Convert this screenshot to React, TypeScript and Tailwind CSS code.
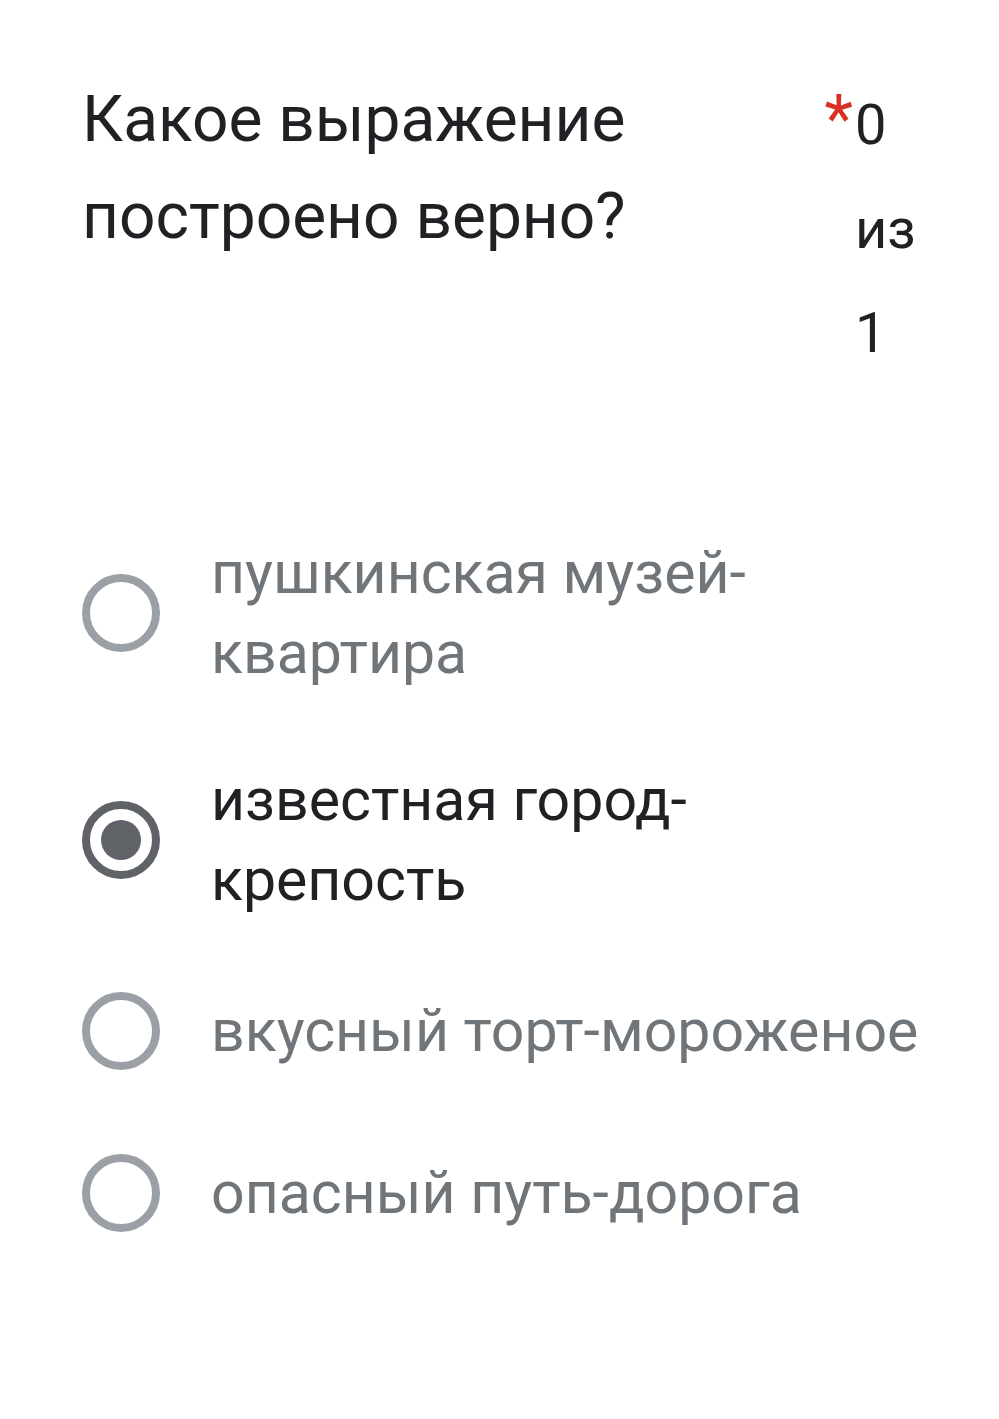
const options = [
  { label: "пушкинская музей-квартира", checked: false, mt: "mt-0" },
  { label: "известная город-крепость", checked: true, mt: "mt-[67px]" },
  { label: "вкусный торт-мороженое", checked: false, mt: "mt-[71px]" },
  { label: "опасный путь-дорога", checked: false, mt: "mt-[82px]" },
];

function Radio({ checked }: { checked: boolean }) {
  return (
    <span
      className={
        checked
          ? "flex h-[78px] w-[78px] shrink-0 items-center justify-center rounded-full border-[8px] border-[#5f6368]"
          : "flex h-[78px] w-[78px] shrink-0 items-center justify-center rounded-full border-[8px] border-[#9aa0a6]"
      }
    >
      {checked && <span className="h-[40px] w-[40px] rounded-full bg-[#5f6368]" />}
    </span>
  );
}

export default function App() {
  return (
    <main
      className="min-h-[1419px] w-full bg-white pl-[82px] pr-[66px] pt-[71px]"
      style={{ fontFamily: "Roboto, 'Noto Sans', sans-serif" }}
    >
      <header className="mr-[12px] flex items-start">
        <h1 className="flex-1 pr-[40px] text-[64px] font-normal leading-[97px] text-[#202124]">
          Какое выражение построено верно?
        </h1>
        <span className="pr-[2px] text-[66px] leading-[97px] text-[#d93025]">*</span>
        <p className="w-[66px] pt-[2px] text-[56px] leading-[104px] text-[#202124]">
          0 из 1
        </p>
      </header>

      <section className="mt-[148px] flex flex-col">
        {options.map((option) => (
          <label key={option.label} className={`flex items-center gap-[51px] ${option.mt}`}>
            <Radio checked={option.checked} />
            <span
              className={
                option.checked
                  ? "text-[59px] leading-[80px] text-[#202124]"
                  : "text-[59px] leading-[80px] text-[#70757a]"
              }
            >
              {option.label}
            </span>
          </label>
        ))}
      </section>
    </main>
  );
}
